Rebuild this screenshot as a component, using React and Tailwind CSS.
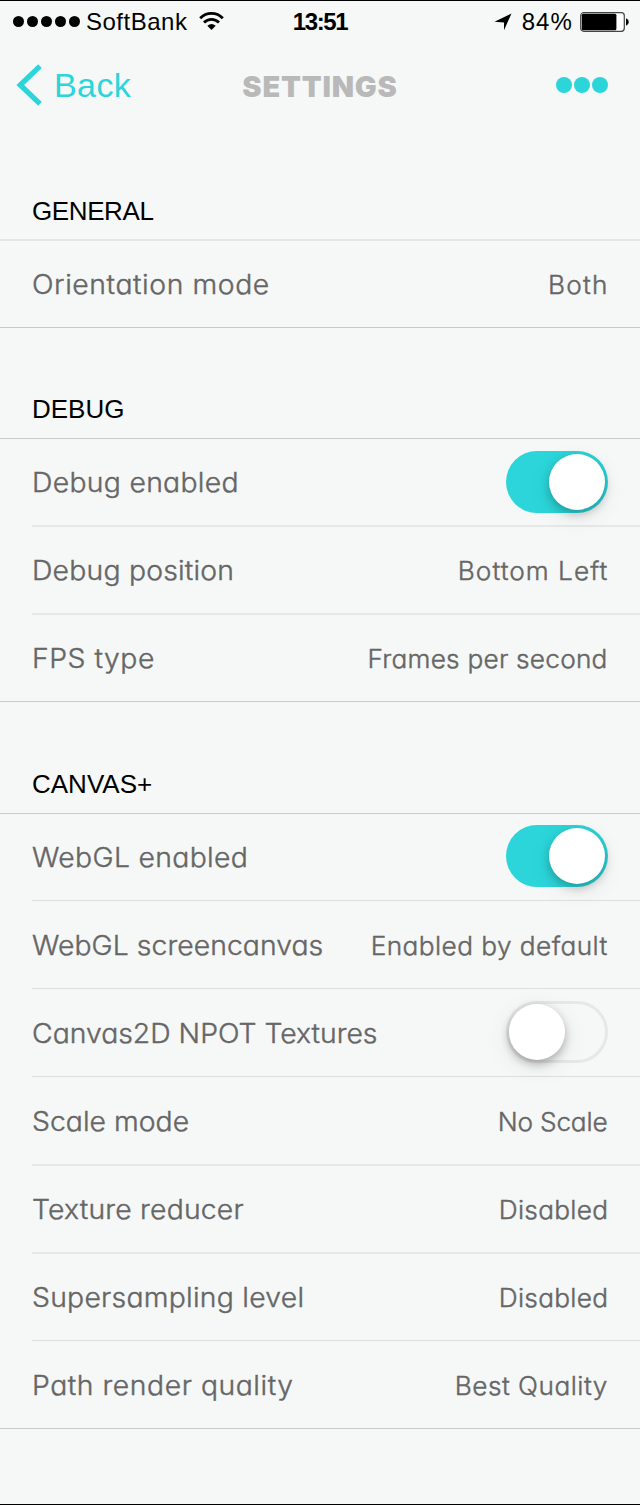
const TEXT = "font-light whitespace-nowrap [-webkit-text-stroke:0.4px_#666] [font-feature-settings:'cv11']";
const LABEL = `${TEXT} origin-left scale-x-105 text-[27px] leading-[34px]`;
const VALUE = `${TEXT} origin-right scale-x-105 text-[25px] leading-[32px]`;

function StatusBar() {
  return (
    <div className="grid h-[42px] grid-cols-[1fr_auto_1fr] items-center pr-[11px] pl-[13px] text-[24px] leading-[28px] text-black">
      <div className="flex items-center">
        <div className="-mt-[2px] flex gap-[3px]">
          {[0, 1, 2, 3, 4].map((i) => (
            <span key={i} className="size-[11px] rounded-full bg-black" />
          ))}
        </div>
        <span className="ml-[6px] tracking-[0.5px]">SoftBank</span>
        <svg className="ml-[12px] -mt-[3px] h-[18px] w-[25px]" viewBox="0 0 25 18">
          <g fill="none" stroke="#000" strokeWidth="2.8">
            <path d="M1.2 6.3C7.5-.2 17.5-.2 23.8 6.3" />
            <path d="M5 10.6C9.3 6.3 15.7 6.3 20 10.6" />
          </g>
          <path d="M8.3 13.7Q12.5 10.1 16.7 13.7L12.5 17.9Z" fill="#000" />
        </svg>
      </div>
      <span className="mr-[2px] font-bold tracking-[-1.4px]">13:51</span>
      <div className="flex items-center justify-end">
        <svg className="mr-[10px] h-[18px] w-[18px]" viewBox="0 0 18 18">
          <path d="M17.5.5L10 17.2V9.4L.5 8.8Z" fill="#000" />
        </svg>
        <span className="text-[24px] tracking-[1.1px]">84%</span>
        <svg className="-mt-[1px] ml-[7px] h-[20px] w-[49px]" viewBox="0 0 49 20">
          <rect x=".7" y=".7" width="43.6" height="18.6" rx="3" fill="#fff" stroke="#444" strokeWidth="1.2" />
          <rect x="1.8" y="1.8" width="34.6" height="16.4" rx="1.5" fill="#000" />
          <path d="M46 6.3Q48.8 7.5 48.8 10T46 13.7Z" fill="#000" />
        </svg>
      </div>
    </div>
  );
}

function NavBar() {
  return (
    <div className="grid h-[86px] grid-cols-[1fr_auto_1fr] items-center px-[16px] pb-[2px] text-[#2bd5d9]">
      <div className="flex items-center">
        <svg className="h-[42px] w-[27px]" viewBox="0 0 27 42">
          <path d="M24 2.2L4.2 21L24 39.8" fill="none" stroke="currentColor" strokeWidth="5.2" />
        </svg>
        <span className="ml-[11px] text-[34px] leading-[40px] tracking-[0.4px]">Back</span>
      </div>
      <h1 className="mt-[3px] font-['Inter',sans-serif] text-[29px] leading-[36px] font-black tracking-[0.8px] text-[#b9b9b9]">
        SETTINGS
      </h1>
      <div className="flex justify-end gap-[2px] pr-[16px]">
        <span className="size-[16px] rounded-full bg-current" />
        <span className="size-[16px] rounded-full bg-current" />
        <span className="size-[16px] rounded-full bg-current" />
      </div>
    </div>
  );
}

function Toggle({ on }) {
  return on ? (
    <div className="mr-[-1px] mb-[3px] flex h-[62px] w-[102px] items-center justify-end rounded-full bg-[#2bd5d9] pr-[3px]">
      <span className="size-[56px] rounded-full bg-white shadow-[0_4px_10px_rgba(0,0,0,0.25),0_8px_28px_rgba(0,0,0,0.06)]" />
    </div>
  ) : (
    <div className="mr-[-1px] mb-[3px] flex h-[62px] w-[102px] items-center justify-start rounded-full border-[3px] border-[#e6e7e7]">
      <span className="size-[56px] shrink-0 rounded-full bg-white shadow-[0_4px_10px_rgba(0,0,0,0.28),0_6px_28px_rgba(0,0,0,0.08)]" />
    </div>
  );
}

const LINES = {
  full: "border-b border-[#c9cbcb]",
  thin: "border-b border-[#dcdede]",
  soft: "border-b-2 border-[#e6e8e7]",
};

function Row({ height, label, track, value, valueTrack, toggle, line }) {
  const full = line === "full";
  return (
    <div className={full ? "" : "pl-[32px]"}>
      <div className={`flex items-center justify-between pr-[33px] ${height} ${LINES[line]} ${full ? "pl-[32px]" : ""}`}>
        <span className={`${LABEL} ${track}`}>{label}</span>
        {value ? <span className={`${VALUE} ${valueTrack}`}>{value}</span> : <Toggle on={toggle === "on"} />}
      </div>
    </div>
  );
}

function Section({ title, head, track, children }) {
  return (
    <section>
      <div className={`flex flex-col justify-end pl-[32px] text-[26px] leading-[30px] text-black ${head}`}>
        <h2 className={track}>{title}</h2>
      </div>
      <div className="font-['Inter',sans-serif] text-[#666]">{children}</div>
    </section>
  );
}

export default function App() {
  return (
    <div className="h-[1505px] w-[640px] overflow-hidden border-y border-black bg-[#f6f8f7] font-['Liberation_Sans',Arial,sans-serif]">
      <StatusBar />
      <NavBar />
      <Section title="GENERAL" head="h-[112px] border-b-2 border-[#e4e6e5] pb-[13px]" track="tracking-[-0.4px]">
        <Row line="full" height="h-[87px] pt-px" label="Orientation mode" track="tracking-[0.55px]" value="Both" valueTrack="tracking-[1.08px] mr-[-1.1px]" />
      </Section>
      <Section title="DEBUG" head="h-[111px] border-b border-[#c9cbcd] pb-[14px]" track="tracking-[0px]">
        <Row line="soft" height="h-[88px] pt-[2px]" label="Debug enabled" track="tracking-[0.28px]" toggle="on" />
        <Row line="soft" height="h-[88px] pt-[2px]" label="Debug position" track="tracking-[0.2px]" value="Bottom Left" valueTrack="tracking-[0.95px] mr-[-1px]" />
        <Row line="full" height="h-[87px] pt-px" label="FPS type" track="tracking-[0.5px]" value="Frames per second" valueTrack="tracking-[0.2px] mr-[-0.2px]" />
      </Section>
      <Section title="CANVAS+" head="h-[112px] border-b border-[#c9cbcb] pb-[14px]" track="tracking-[0px]">
        <Row line="thin" height="h-[87px] pt-px" label="WebGL enabled" track="tracking-[0.32px]" toggle="on" />
        <Row line="thin" height="h-[88px] pt-[2px]" label="WebGL screencanvas" track="tracking-[0.05px]" value="Enabled by default" valueTrack="tracking-[0.4px] mr-[-0.4px]" />
        <Row line="thin" height="h-[88px] pt-[2px]" label="Canvas2D NPOT Textures" track="tracking-[0px]" toggle="off" />
        <Row line="soft" height="h-[89px] pt-[2px]" label="Scale mode" track="tracking-[0.02px]" value="No Scale" valueTrack="tracking-[-0.2px]" />
        <Row line="soft" height="h-[88px] pt-[2px]" label="Texture reducer" track="tracking-[0.2px]" value="Disabled" valueTrack="tracking-[0.25px] mr-[-0.8px]" />
        <Row line="thin" height="h-[87px] pt-px" label="Supersampling level" track="tracking-[0.24px]" value="Disabled" valueTrack="tracking-[0.25px] mr-[-0.8px]" />
        <Row line="full" height="h-[88px] pt-[2px]" label="Path render quality" track="tracking-[0.52px]" value="Best Quality" valueTrack="tracking-[0.45px] mr-[-0.5px]" />
      </Section>
    </div>
  );
}
